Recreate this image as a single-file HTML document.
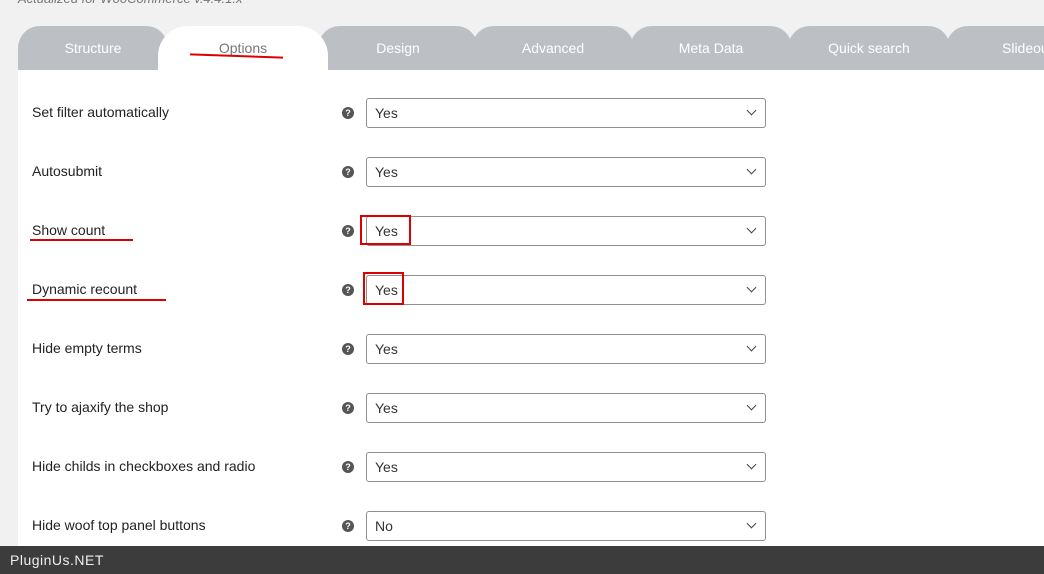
<!DOCTYPE html>
<html><head><style>
body{margin:0;width:1044px;height:574px;overflow:hidden;background:#f1f1f1;font-family:"Liberation Sans",sans-serif;position:relative}
.top{position:absolute;left:18px;top:-9px;font-style:italic;color:#777;font-size:13px}
.tab{position:absolute;top:26px;height:44px;background:#bcc0c5;border-radius:22px 22px 0 0;color:#fff;font-size:14px;text-align:center;line-height:44px}
.tab.act{background:#fff;color:#777;z-index:2}
.panel{position:absolute;left:18px;top:70px;right:0;bottom:0;background:#fff}
.row{position:absolute;left:0;width:1026px;height:30px}
.lab{position:absolute;left:14px;top:6px;font-size:14px;color:#222}
.q{position:absolute;left:324px;top:9px;width:12px;height:12px;border-radius:50%;background:#555;color:#fff;font-size:9px;font-weight:bold;text-align:center;line-height:12px}
.sel{position:absolute;left:348px;top:0;width:390px;height:28px;border:1px solid #8c8f94;border-radius:3px;font-size:14px;color:#333;line-height:28px;padding-left:8px;box-sizing:content-box}
.sel:after{content:"";position:absolute;right:10px;top:8px;width:6px;height:6px;border-right:1.6px solid #444;border-bottom:1.6px solid #444;transform:rotate(45deg)}
.red{position:absolute;background:#d00;height:2px}
.box{position:absolute;border:2px solid #d00}
.bar{position:absolute;left:0;top:546px;width:1044px;height:28px;background:#3c3c3c;color:#eee;font-size:14px;line-height:28px;padding-left:10px;box-sizing:border-box;letter-spacing:.5px}
</style></head><body>
<div class="top">Actualized for WooCommerce v.4.4.1.x</div>
<div class="tab" style="left:18px;width:150px">Structure</div>
<div class="tab act" style="left:158px;width:170px;border-radius:30px 30px 0 0">Options</div>
<div class="tab" style="left:318px;width:160px">Design</div>
<div class="tab" style="left:472px;width:162px">Advanced</div>
<div class="tab" style="left:630px;width:162px">Meta Data</div>
<div class="tab" style="left:788px;width:162px">Quick search</div>
<div class="tab" style="left:946px;width:140px;text-align:left;padding-left:56px;box-sizing:border-box">Slideout</div>
<div class="panel">
<div class="row" style="top:28px"><span class="lab">Set filter automatically</span><span class="q">?</span><div class="sel">Yes</div></div>
<div class="row" style="top:87px"><span class="lab">Autosubmit</span><span class="q">?</span><div class="sel">Yes</div></div>
<div class="row" style="top:146px"><span class="lab">Show count</span><span class="q">?</span><div class="sel">Yes</div></div>
<div class="row" style="top:205px"><span class="lab">Dynamic recount</span><span class="q">?</span><div class="sel">Yes</div></div>
<div class="row" style="top:264px"><span class="lab">Hide empty terms</span><span class="q">?</span><div class="sel">Yes</div></div>
<div class="row" style="top:323px"><span class="lab">Try to ajaxify the shop</span><span class="q">?</span><div class="sel">Yes</div></div>
<div class="row" style="top:382px"><span class="lab">Hide childs in checkboxes and radio</span><span class="q">?</span><div class="sel">Yes</div></div>
<div class="row" style="top:441px"><span class="lab">Hide woof top panel buttons</span><span class="q">?</span><div class="sel">No</div></div>
</div>
<div class="red" style="left:190px;top:55px;width:93px;transform:rotate(2deg);z-index:3"></div>
<div class="red" style="left:30px;top:239px;width:103px"></div>
<div class="red" style="left:27px;top:299px;width:139px"></div>
<div class="box" style="left:360px;top:215px;width:47px;height:26px"></div>
<div class="box" style="left:363px;top:272px;width:37px;height:29px"></div>
<div class="bar">PluginUs.NET</div>
</body></html>
